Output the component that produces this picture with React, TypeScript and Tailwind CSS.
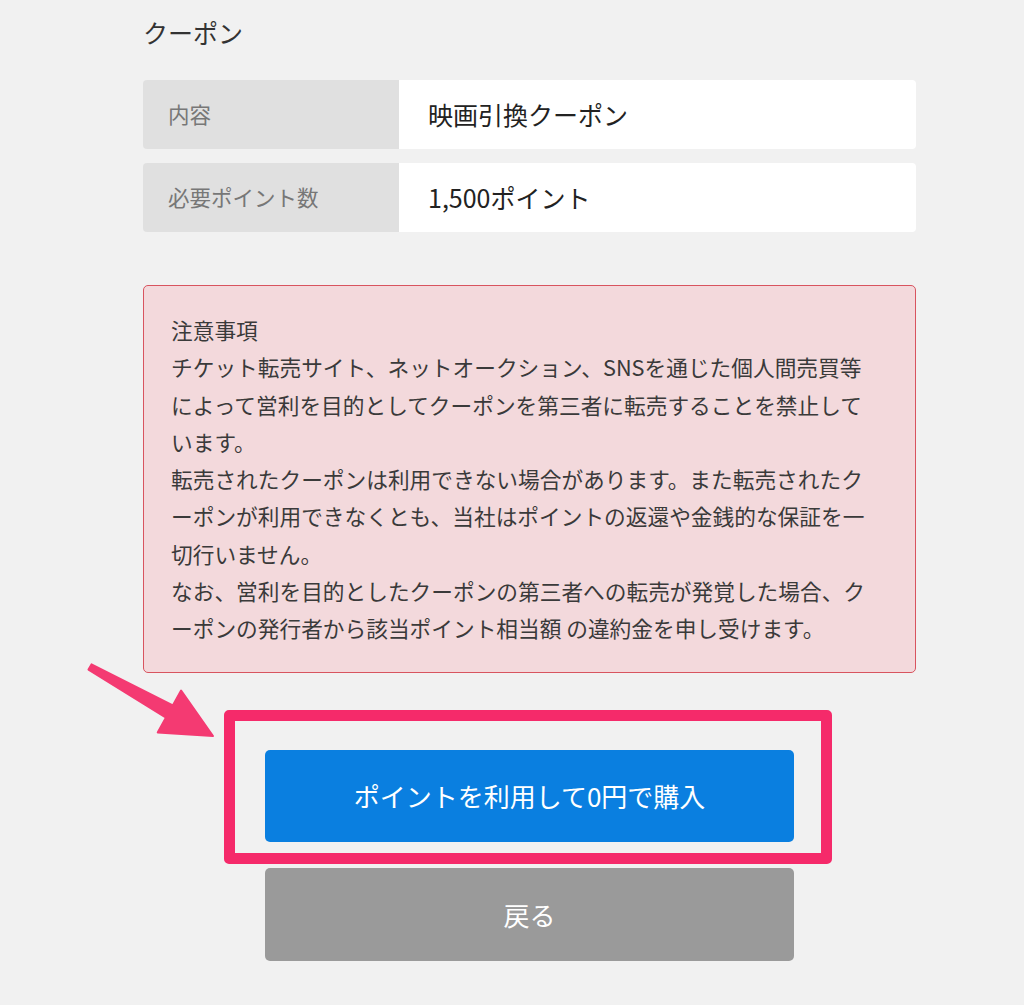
import React from "react"

const FONT = { fontFamily: '"Noto Sans CJK JP", "Noto Sans", sans-serif' }

const rows = [
  { label: "内容", value: "映画引換クーポン" },
  { label: "必要ポイント数", value: "1,500ポイント" },
]

const noticeLines = [
  "注意事項",
  "チケット転売サイト、ネットオークション、SNSを通じた個人間売買等",
  "によって営利を目的としてクーポンを第三者に転売することを禁止して",
  "います。",
  "転売されたクーポンは利用できない場合があります。また転売されたク",
  "ーポンが利用できなくとも、当社はポイントの返還や金銭的な保証を一",
  "切行いません。",
  "なお、営利を目的としたクーポンの第三者への転売が発覚した場合、ク",
  "ーポンの発行者から該当ポイント相当額 の違約金を申し受けます。",
]

export default function App() {
  return (
    <div className="relative min-h-screen w-full bg-[#f1f1f1] text-[#333]" style={FONT}>
      <div className="ml-[143px] w-[773px] pt-[14px]">
        {/* Title */}
        <h2 className="text-[25px] leading-[36px] text-[#333]">クーポン</h2>

        {/* Coupon table */}
        <div className="mt-[30px] flex flex-col gap-[14px]">
          {rows.map((row) => (
            <div key={row.label} className="flex h-[69px] overflow-hidden rounded-[4px]">
              <div className="flex w-[256px] items-center bg-[#e0e0e0] pl-[25px] text-[21.5px] text-[#777]">
                {row.label}
              </div>
              <div className="flex flex-1 items-center bg-white pl-[29px] text-[25px] text-[#222]">
                {row.value}
              </div>
            </div>
          ))}
        </div>

        {/* Notice */}
        <div className="mt-[53px] rounded-[5px] border border-[#d8545f] bg-[#f3d9dc] px-[27px] py-[25px] text-[21.7px] leading-[37.3px] text-[#3a3a3a]">
          {noticeLines.map((line, i) => (
            <div key={i} className="whitespace-nowrap">
              {line}
            </div>
          ))}
        </div>

        {/* Buttons */}
        <div className="mx-auto mt-[77px] w-[529px]">
          <div className="relative">
            <button className="flex h-[92px] w-full items-center justify-center rounded-[5px] bg-[#0a7fe0] text-[26px] text-white">
              ポイントを利用して0円で購入
            </button>
            <div className="pointer-events-none absolute -left-[41px] -top-[40px] h-[154px] w-[608px] rounded-[5px] border-[11px] border-[#f52a6a]" />
          </div>
          <button className="mt-[26px] flex h-[93px] w-full items-center justify-center rounded-[5px] bg-[#9a9a9a] text-[26px] text-white">
            戻る
          </button>
        </div>
      </div>

      {/* Annotation arrow */}
      <svg className="pointer-events-none absolute left-0 top-0" width="1024" height="1005" viewBox="0 0 1024 1005">
        <polygon
          points="91.5,664.4 172.8,705.4 181.1,690.6 213,736 157.7,732.4 166,717.6 88.5,669.6"
          fill="#f43a72"
          stroke="#f43a72"
          strokeWidth="2"
          strokeLinejoin="round"
        />
      </svg>
    </div>
  )
}
